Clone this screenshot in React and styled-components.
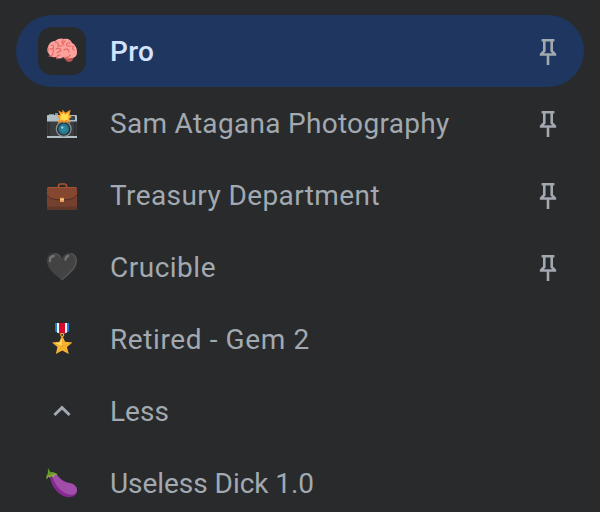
import React from 'react';
import styled, { createGlobalStyle } from 'styled-components';

const GlobalStyle = createGlobalStyle`
  * { box-sizing: border-box; }
  html, body { margin: 0; background: #282a2c; overflow: hidden; }
`;

const Panel = styled.nav`
  width: 600px;
  height: 512px;
  padding: 15px 16px 0;
  overflow: hidden;
  background: #282a2c;
  font-family: Roboto, sans-serif;
`;

const Row = styled.div`
  display: flex;
  align-items: center;
  height: 72px;
  padding: 0 24px 0 22px;
  border-radius: 36px;
  background: ${(p) => (p.$selected ? '#1f3760' : 'transparent')};
`;

const IconTile = styled.span`
  display: flex;
  flex: none;
  width: 48px;
  height: 48px;
  border-radius: 14px;
  background: ${(p) => (p.$selected ? '#282a2c' : 'transparent')};
`;

const Label = styled.span`
  flex: 1;
  margin-left: 24px;
  padding-top: 2px;
  white-space: nowrap;
  font-size: 28px;
  line-height: 36px;
  font-weight: ${(p) => (p.$selected ? 500 : 400)};
  letter-spacing: ${(p) => p.$tracking}px;
  color: ${(p) => (p.$selected ? '#d3e3fd' : '#a2a9b0')};
`;

const Glyph = styled.svg`
  display: block;
  flex: none;
`;

const Brain = () => (
  <Glyph width="48" height="48" viewBox="0 0 48 48">
    <path d="M26 30l9-1c1 3-1 6-4 6-2 0-4-2-5-5z" fill="#b9524f" />
    <path d="M10 20c1-4 4-6 7-6 3-3 7-3 9-2 4-1 7 1 8 4 4 2 5 6 5 9 0 4-2 6-6 6-4 1-6 0-8-1-2 2-5 2-7 0-4 1-6-1-7-3-2-2-2-5-1-7z" fill="#fda19d" />
    <path d="M13 18c3 0 3 2 2 4m2-7c3 0 4 2 3 4h4m1-6c-2 2-1 4 1 5m6-2c-3-1-4 1-3 3h4m3 0c-2 1-2 3 0 4m-24-1c3-1 4 1 3 3m3-3c3-2 5 0 5 2m3-1c2-2 5-1 5 2m-20 4c2 1 4-1 4-3m4 6c-1-3 1-4 3-4m4 3c3 0 5-1 6-3m-22-7v3m15-8l2-2m-5 10l-3 2m9 4l2 2" fill="none" stroke="#df6865" strokeWidth="1.1" strokeLinecap="round" />
  </Glyph>
);

const Camera = () => (
  <Glyph width="48" height="48" viewBox="0 0 48 48">
    <path d="M11 15h5v3h-5zM17 14h3v3h-3z" fill="#80949e" />
    <path d="M9 17q0-1 1-1h28q1 0 1 1v6H9z" fill="#b0bec5" />
    <path d="M9 22.5h30V38H9z" fill="#3a3c3e" />
    <path d="M11 23v14M37 23v14" stroke="#232527" />
    <path d="M9 37h30v2H9z" fill="#b0bec5" />
    <rect x="31" y="17" width="6" height="4" rx=".6" fill="#37474f" />
    <circle cx="25.7" cy="30" r="8" fill="#8c9295" />
    <circle cx="25.7" cy="30" r="6.8" fill="#26343a" />
    <circle cx="25.7" cy="30" r="5.4" fill="#27768b" />
    <circle cx="25.7" cy="30" r="3" fill="#2e879d" />
    <circle cx="24.2" cy="28.4" r="1.2" fill="#8bd0de" />
    <path d="M24.200 10.500l3.300 3.300 5-3-.8 5 2 2.200-2.500 1.700 1.300 4.300-4.500-1.800-2 1.800-1.800-1.600-4.700 1.600 1.700-4.200-2.700-3 3.700-.8-2-4.400 4.300 2z" fill="#fb9522" />
    <path d="M24.800 13l2.400 2.700 3.800-2.200-1 3.500 2 1.200-2.200.9 1 2.500-3-.9-1.700 1.200-1.400-1.400-3 1 1.200-2.600-1.700-1.500 2.200-.5-1.200-2.500 2.600 1.100z" fill="#ffdf4e" />
  </Glyph>
);

const Briefcase = () => (
  <Glyph width="48" height="48" viewBox="0 0 48 48">
    <path d="M20.500 16v-1q0-2 2-2h4q2 0 2 2v1" fill="none" stroke="#a85532" strokeWidth="1.600" />
    <rect x="9" y="16" width="30" height="22.700" rx="1.500" fill="#76402f" />
    <path d="M9 35.500h30v1.700q0 1.500-1.500 1.500h-27Q9 38.700 9 37.200z" fill="#5f3829" />
    <path d="M9 24v-6.500q0-1.500 1.500-1.500h27q1.500 0 1.500 1.500V24c-2 4-7 5-15 5S11 28 9 24z" fill="#854730" />
    <path d="M9.500 24c2 4 7 4.800 14.500 4.800S36.500 28 38.500 24" fill="none" stroke="#4d2c23" />
    <path d="M10 16.500h28" stroke="#a35437" />
    <rect x="22" y="26.700" width="4" height="4.300" rx=".4" fill="#e9a35a" />
    <path d="M22 28.500h4" stroke="#ffcd83" strokeWidth=".8" />
  </Glyph>
);

const Heart = () => (
  <Glyph width="48" height="48" viewBox="0 0 48 48">
    <path d="M24 37.700C20 33.500 9 27 9 18.500 9 13 12 10 16.500 10c3.500 0 6 2 7.500 5.500C25.500 12 28 10 31.500 10 36 10 39 13 39 18.500 39 27 28 33.500 24 37.700z" fill="#434343" />
    <path d="M33 10.700c3.500.8 5.300 3.700 5.300 7.800C38.300 26 29 31.500 24 36.700M22.800 15c-1.200-2.500-3-4.100-6-4.300" fill="none" stroke="#565656" strokeWidth="1.300" />
    <path d="M12 18c-.3-2.500 1-4.500 3.800-5M27.500 16.500c0-1.700 1-3 2.700-3.700" fill="none" stroke="#717171" strokeWidth="2.400" strokeLinecap="round" />
  </Glyph>
);

const Medal = () => (
  <Glyph width="48" height="48" viewBox="0 0 48 48">
    <path d="M17 8h14v8.500l-5 2h-4l-5-2z" fill="#197bc9" />
    <path d="M19 8h10v9.500l-3 1h-4l-3-1z" fill="#f4f5f7" />
    <path d="M21 8h6v10.500h-6z" fill="#d6092f" />
    <circle cx="24.200" cy="20" r="1.500" fill="none" stroke="#f4a82b" strokeWidth="1.200" />
    <path d="M24.200 20.500l2.900 6.200 7.300.7-5.500 4.600 1.900 7-6.600-3.600-6.400 3.600 1.700-7-5.500-4.600 7.300-.7z" fill="#fbb630" />
    <path d="M24.200 22v9.500l5.500 6M24.200 31.500l-5.200 6M24.200 31.500l9-3.600M24.200 31.500l-9-3.600" fill="none" stroke="#e69a2a" strokeWidth=".6" />
    <path d="M24 23l-2.200 4.800-5 .5 5 1.700 2 .8z" fill="#ffdc68" />
  </Glyph>
);

const Chevron = () => (
  <Glyph width="48" height="48" viewBox="0 0 48 48">
    <path d="M16.400 28L24 20.700l7.600 7.300" fill="none" stroke="#a2a9b0" strokeWidth="3" />
  </Glyph>
);

const Eggplant = () => (
  <Glyph width="48" height="48" viewBox="0 0 48 48">
    <path d="M12 17c2-3 5-3 7-1 4 5 7 7 12 8 5 .5 8 3.500 8 7.500 0 4.500-4 7-9 6.700-8-.7-17.500-10-18-21.200z" fill="#862a92" />
    <path d="M14 16c2-2 4-1.500 5 0 4 5 7 7 12 8 5 .5 8 3.500 8 7 0 4-4 5.500-8 4.500C23 34 16 25 14 16z" fill="#a04eaa" />
    <path d="M10 9l2.500 4.200c2.500-.7 5 .3 7 2.300l-3.700.4.700 2.600-3.800-1.500-1 2-1.300-1.700L8.500 20.500c-.5-2.500-.2-4.500 1.300-6z" fill="#64992c" />
    <path d="M9 19.500l1.500-2.900 1.200 1.600 1-1.900 3.300 1.300-.7-2 3.700-.3" fill="none" stroke="#c1c94d" strokeWidth=".6" />
  </Glyph>
);

const Pin = () => (
  <Glyph width="24" height="32" viewBox="0 0 24 32">
    <path d="M5.600 5.300h12.800M8.300 6v10L5.100 19.200v.3h13.800v-.3L15.700 16V6M12 20v10" fill="none" stroke="#a2a9b0" strokeWidth="2.600" />
  </Glyph>
);

const items = [
  { label: 'Pro', Icon: Brain, pinned: true, selected: true, tracking: 0.3 },
  { label: 'Sam Atagana Photography', Icon: Camera, pinned: true, tracking: 0.3 },
  { label: 'Treasury Department', Icon: Briefcase, pinned: true, tracking: 0.4 },
  { label: 'Crucible', Icon: Heart, pinned: true, tracking: 0.5 },
  { label: 'Retired - Gem 2', Icon: Medal, tracking: 0.6 },
  { label: 'Less', Icon: Chevron, tracking: 0 },
  { label: 'Useless Dick 1.0', Icon: Eggplant, tracking: -0.05 },
];

export default function App() {
  return (
    <>
      <GlobalStyle />
      <Panel>
        {items.map(({ label, Icon, pinned, selected, tracking }) => (
          <Row key={label} $selected={selected}>
            <IconTile $selected={selected}><Icon /></IconTile>
            <Label $selected={selected} $tracking={tracking}>{label}</Label>
            {pinned && <Pin />}
          </Row>
        ))}
      </Panel>
    </>
  );
}
